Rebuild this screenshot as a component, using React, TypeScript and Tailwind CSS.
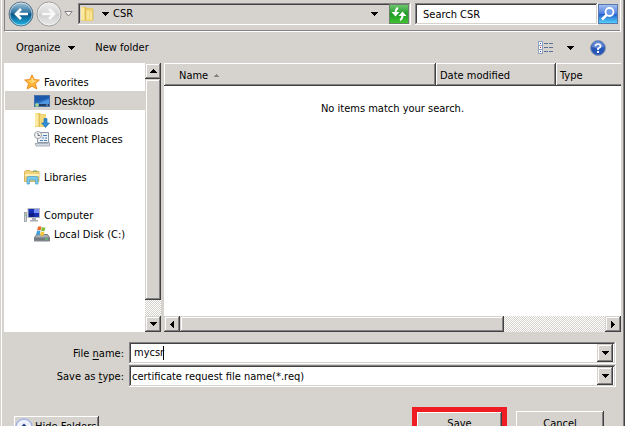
import React from 'react'

const raised =
  'bg-[#d6d3ce] shadow-[inset_-1px_-1px_#424142,inset_1px_1px_#d6d3ce,inset_-2px_-2px_#848284,inset_2px_2px_#ffffff]'
const raisedWhite =
  'bg-[#d6d3ce] shadow-[inset_-1px_-1px_#424142,inset_1px_1px_#ffffff,inset_-2px_-2px_#848284]'
const sunken =
  'shadow-[inset_-1px_-1px_#ffffff,inset_1px_1px_#848284,inset_-2px_-2px_#d6d3ce,inset_2px_2px_#424142]'
const track =
  'bg-[repeating-conic-gradient(#d6d3ce_0_25%,#ffffff_0_50%)] bg-[length:2px_2px]'

type Dir = 'up' | 'down' | 'left' | 'right'

const arrowShapes: Record<Dir, string> = {
  up: 'M3 0h1v1h1v1h1v1h1v1H0V3h1V2h1V1h1z',
  down: 'M0 0h7v1H6v1H5v1H4v1H3V3H2V2H1V1H0z',
  left: 'M0 3h1V2h1V1h1V0h1v7H3V6H2V5H1V4H0z',
  right: 'M0 0h1v1h1v1h1v1h1v1H3v1H2v1H1v1H0z',
}

function Arrow({ dir = 'down' as Dir, color = '#000000' }) {
  const flat = dir === 'up' || dir === 'down'
  const w = flat ? 7 : 4
  const h = flat ? 4 : 7
  return (
    <svg width={w} height={h} viewBox={`0 0 ${w} ${h}`} shapeRendering="crispEdges" aria-hidden="true">
      <path d={arrowShapes[dir]} fill={color} />
    </svg>
  )
}

function ScrollButton({ dir, label }: { dir: Dir; label: string }) {
  return (
    <button aria-label={label} className={`flex size-4 shrink-0 items-center justify-center ${raised}`}>
      <Arrow dir={dir} />
    </button>
  )
}

function NavIcon({ forward = false }) {
  const id = forward ? 'fwd' : 'back'
  return (
    <svg width="26" height="26" viewBox="0 0 26 26" aria-hidden="true">
      <defs>
        <linearGradient id={id} x1="0" y1="0" x2="0" y2="1">
          <stop offset="0" stopColor={forward ? '#eeeeee' : '#a9c9dd'} />
          <stop offset=".47" stopColor={forward ? '#d9d9d9' : '#286f9d'} />
          <stop offset=".5" stopColor={forward ? '#cfcfcf' : '#0a5585'} />
          <stop offset="1" stopColor={forward ? '#e9e9e9' : '#20b8ea'} />
        </linearGradient>
      </defs>
      <circle cx="13" cy="13" r="12" fill={`url(#${id})`} stroke={forward ? '#9b9b9b' : '#5c7488'} />
      <circle cx="13" cy="13" r="11" fill="none" stroke="#ffffff" strokeOpacity=".5" />
      <path
        d={forward ? 'M6 13h11M13 8l5 5-5 5' : 'M20 13H9M13 8l-5 5 5 5'}
        fill="none"
        stroke={forward ? '#f8f8f8' : '#ffffff'}
        strokeWidth="2.600"
      />
    </svg>
  )
}

function Folder() {
  return (
    <svg width="16" height="16" viewBox="0 0 16 16" aria-hidden="true">
      <path d="M1 1h5l1 1h6v13H1z" fill="#e8c85f" />
      <path d="M1 1l4 1v13l-4-1z" fill="#fbeaa0" />
      <path d="M6 4l7-1v11l-7 1z" fill="#f3d97a" />
      <path d="M8 5v8M11 6v8" stroke="#fdf3bf" />
      <path d="M5 2v13M13 3v11" stroke="#cfa83c" strokeWidth=".6" />
    </svg>
  )
}

function Star() {
  return (
    <svg width="16" height="16" viewBox="0 0 16 16" aria-hidden="true">
      <path
        d="M8 .8l2.200 4.800 5.200.4-4 3.500 1.400 5.500L8 12.200 3.200 15l1.300-5.500L.6 6l5.200-.4z"
        fill="#ffb43a"
        stroke="#e8871c"
        strokeWidth=".9"
      />
      <path d="M8 3l1.500 3.500 3.500.3L8 9z" fill="#ffe08a" />
      <path d="M8 3L6.500 6.500 3 6.800 8 9z" fill="#ffd066" />
    </svg>
  )
}

function DesktopIcon() {
  return (
    <svg width="16" height="16" viewBox="0 0 16 16" aria-hidden="true">
      <rect x=".5" y="2.500" width="15" height="11" fill="#2a6cc0" stroke="#4a72a8" />
      <path d="M1 3h14v2L1 9z" fill="#1c58ac" />
      <path d="M3 11L15 6v5z" fill="#4d97df" />
      <path d="M1 11h14v2H1z" fill="#243c60" />
      <circle cx="3" cy="12" r="2" fill="#46b8dc" />
      <path d="M3 10v4M1 12h4" stroke="#e4df57" strokeWidth=".8" />
      <path d="M12 12h2" stroke="#8fb1d5" />
    </svg>
  )
}

function Downloads() {
  return (
    <svg width="16" height="16" viewBox="0 0 16 16" aria-hidden="true">
      <path d="M1 1h5l1 1h5v13H1z" fill="#e8c85f" />
      <path d="M1 1l4 1v13l-4-1z" fill="#fbeaa0" />
      <path d="M6 3l6-1v12l-6 1z" fill="#f3d97a" />
      <path d="M5 2v13" stroke="#cfa83c" strokeWidth=".6" />
      <path d="M10 6.500h3V11h2.500l-4 4.500-4-4.500H10z" fill="#2f8fd8" stroke="#1767ab" strokeWidth=".6" />
    </svg>
  )
}

function Recent() {
  return (
    <svg width="16" height="16" viewBox="0 0 16 16" aria-hidden="true">
      <path d="M5 1.500h9.500v10h-11V6z" fill="#eef2f6" stroke="#8c98a5" />
      <path d="M1 12.500h12l2.500-1V15H2z" fill="#d4dae0" stroke="#8c98a5" strokeWidth=".7" />
      <path d="M9 4.500h4M8 7h2M11 7h2M6 9.500h3M10 9.500h3" stroke="#4682b8" />
      <circle cx="4" cy="4" r="3.500" fill="#f5f5f5" stroke="#9a9fa5" />
      <path d="M4 2v2.500h2" fill="none" stroke="#4c5661" strokeWidth=".8" />
    </svg>
  )
}

function Libraries() {
  return (
    <svg width="16" height="16" viewBox="0 0 16 16" aria-hidden="true">
      <path d="M.5 2.500L2 1.500h4l1 1h8v10H.5z" fill="#efd27a" stroke="#d1aa4b" strokeWidth=".8" />
      <path d="M1 5h14v2H1z" fill="#fff1b5" />
      <path d="M9 2h4" stroke="#68a862" />
      <path d="M3 15V9q0-1.500 1.500-1.500h8Q14 7.500 14 9v6h-2.500v-4h-6v4z" fill="#78c9ed" stroke="#4b9fc9" strokeWidth=".7" />
    </svg>
  )
}

function Computer() {
  return (
    <svg width="16" height="16" viewBox="0 0 16 16" aria-hidden="true">
      <rect x=".5" y="5.500" width="2" height="9" fill="#cfd3d6" stroke="#858b91" strokeWidth=".7" />
      <path d="M1 8h1" stroke="#53c653" />
      <rect x="4" y="1.500" width="11.500" height="9" fill="#1530b5" stroke="#b4b8be" />
      <path d="M10 2h5v4h-5z" fill="#7990f0" />
      <path d="M5 6h5v4H5z" fill="#0c1c84" />
      <path d="M8 11h4v2h2v1.500H6V13h2z" fill="#a7adb4" />
    </svg>
  )
}

function Disk() {
  return (
    <svg width="16" height="16" viewBox="0 0 16 16" aria-hidden="true">
      <path d="M2.500 8.500h11l2 3v3.500H.5v-3.500z" fill="#a8adb1" stroke="#5f666b" strokeWidth=".8" />
      <path d="M1 11.500h14v3H1z" fill="#737b80" />
      <path d="M11 13h3" stroke="#64e36a" />
      <path d="M4 .8q2-1 3.500 0L6.500 4.500Q5 3.500 3 4.500z" fill="#ef6a2b" />
      <path d="M8 1q2 1 3.500 0l-1 4Q9 5.500 7 4.800z" fill="#7abf36" />
      <path d="M3 5q2-1 3.500 0l-1 4Q4 8 2 9z" fill="#3aa0e2" />
      <path d="M7 5.500q2 1 3.500 0l-1 4Q8 10 6 9.300z" fill="#fac432" />
    </svg>
  )
}

function Refresh() {
  return (
    <svg width="20" height="20" viewBox="0 0 20 20" aria-hidden="true">
      <defs>
        <linearGradient id="refresh" x1="0" y1="0" x2="0" y2="1">
          <stop offset="0" stopColor="#72c873" />
          <stop offset=".5" stopColor="#1f9a26" />
          <stop offset="1" stopColor="#42c531" />
        </linearGradient>
      </defs>
      <rect x=".5" y=".5" width="19" height="19" fill="url(#refresh)" stroke="#66836a" />
      <path d="M9 4Q6.500 5 6.500 9M11 16q2.500-1 2.500-5" fill="none" stroke="#ffffff" strokeWidth="2" />
      <path d="M2.500 8h8l-4 4.500zM9.500 12h8l-4-4.500z" fill="#ffffff" />
    </svg>
  )
}

function SearchIcon() {
  return (
    <svg width="20" height="20" viewBox="0 0 20 20" aria-hidden="true">
      <defs>
        <linearGradient id="search" x1="0" y1="0" x2="0" y2="1">
          <stop offset="0" stopColor="#a9c2f2" />
          <stop offset=".48" stopColor="#4d7fe0" />
          <stop offset=".52" stopColor="#2361d0" />
          <stop offset="1" stopColor="#55d6fa" />
        </linearGradient>
      </defs>
      <rect x=".5" y=".5" width="19" height="19" fill="url(#search)" stroke="#5a78ac" />
      <circle cx="11.500" cy="8" r="4" fill="#6d9be8" stroke="#ffffff" strokeWidth="1.800" />
      <path d="M8.500 11L4 15.500" stroke="#ffffff" strokeWidth="2.500" />
    </svg>
  )
}

function ViewIcon() {
  return (
    <svg width="16" height="13" viewBox="0 0 16 13" shapeRendering="crispEdges" aria-hidden="true">
      {[0, 4, 8].map((y, i) => (
        <g key={y}>
          <rect x=".5" y={y + 0.5} width="4" height="4" fill="#ffffff" stroke="#8fa2c4" />
          <rect x="2" y={y + 2} width="1" height="1" fill={i === 1 ? '#d02020' : '#1f55a5'} />
          <path d={`M6 ${y + 2.5}h4M11 ${y + 2.5}h4`} stroke="#5c7299" />
        </g>
      ))}
    </svg>
  )
}

function HelpIcon() {
  return (
    <svg width="16" height="16" viewBox="0 0 16 16" aria-hidden="true">
      <circle cx="8" cy="8" r="7.400" fill="#2857b8" stroke="#8090b0" />
      <path d="M2 7a6 6 0 0 1 12 0Q8 9 2 7z" fill="#6288d4" />
      <path d="M5.500 6.200Q5.500 4 8 4t2.500 2.200Q10.500 7.500 8 8.500V10" fill="none" stroke="#ffffff" strokeWidth="1.700" />
      <rect x="7" y="11" width="2" height="2" fill="#ffffff" />
    </svg>
  )
}

function HideIcon() {
  return (
    <svg width="18" height="18" viewBox="0 0 18 18" aria-hidden="true">
      <circle cx="9" cy="9" r="8" fill="#eef1fa" stroke="#a6b4e2" strokeWidth="1.500" />
      <path d="M9 5.500l3.500 3.500h-2v3h-3V9h-2z" fill="#24448e" />
    </svg>
  )
}

function TreeItem({
  icon,
  label,
  child = false,
  selected = false,
}: {
  icon: React.ReactNode
  label: string
  child?: boolean
  selected?: boolean
}) {
  return (
    <li>
      <button
        className={`flex h-[19px] w-full items-center gap-1 whitespace-nowrap ${child ? 'pl-[29px]' : 'pl-[19px]'} ${
          selected ? 'bg-[#d6d3ce]' : ''
        }`}
      >
        {icon}
        <span className="pt-0.5">{label}</span>
      </button>
    </li>
  )
}

export default function App() {
  return (
    <div className="flex h-screen overflow-hidden border-r border-[#424142] bg-[#d6d3ce] pl-px font-['DejaVu_Sans_Condensed','DejaVu_Sans',sans-serif] text-[11px] leading-[14px] text-black">
      <div className="flex min-w-0 flex-1 flex-col border-r border-l border-r-[#848284] border-l-white pr-[2px] pl-[2px]">
        <header className="flex h-8 shrink-0 items-start border-r border-b border-l border-white border-l-[#848284] pl-[3px] shadow-[inset_0_-1px_#848284]">
          <nav className="flex shrink-0 items-center gap-[2px] pt-px">
            <button aria-label="Back">
              <NavIcon />
            </button>
            <button aria-label="Forward">
              <NavIcon forward />
            </button>
            <button aria-label="Recent locations">
              <svg width="9" height="6" viewBox="0 0 9 6" aria-hidden="true">
                <path d="M.8.5h7.400L4.500 5z" fill="#f5f5f5" stroke="#848284" />
              </svg>
            </button>
          </nav>
          <div className={`mt-[3px] ml-[5px] flex h-[22px] min-w-0 flex-1 items-center pl-[2px] ${sunken}`}>
            <Folder />
            <button aria-label="Show path" className="mr-1 ml-1.5">
              <Arrow />
            </button>
            <span className="flex-1">CSR</span>
            <button aria-label="Previous locations" className="mr-[11px]">
              <Arrow />
            </button>
            <button aria-label="Refresh" className="mr-[2px]">
              <Refresh />
            </button>
          </div>
          <div className="mt-[3px] ml-1 flex w-[205px] shrink-0 items-center">
            <input
              type="text"
              aria-label="Search CSR"
              placeholder="Search CSR"
              className={`h-[22px] w-[183px] bg-white px-2 outline-none placeholder:text-black placeholder:opacity-100 ${sunken}`}
            />
            <button aria-label="Search">
              <SearchIcon />
            </button>
          </div>
        </header>

        <div className="flex h-[31px] shrink-0 items-center pr-[15px] pl-3">
          <button className="flex items-center gap-2">
            Organize <Arrow />
          </button>
          <button className="ml-5">New folder</button>
          <span className="flex-1" />
          <button aria-label="Change view">
            <ViewIcon />
          </button>
          <button aria-label="More views" className="mr-4 ml-[13px]">
            <Arrow />
          </button>
          <button aria-label="Help">
            <HelpIcon />
          </button>
        </div>

        <main className="flex min-h-0 flex-1 gap-[3px]">
          <aside className="flex w-[157px] shrink-0 bg-white">
            <nav className="min-w-0 flex-1 pt-[9px] pl-px">
              <ul>
                <TreeItem icon={<Star />} label="Favorites" />
                <TreeItem icon={<DesktopIcon />} label="Desktop" child selected />
                <TreeItem icon={<Downloads />} label="Downloads" child />
                <TreeItem icon={<Recent />} label="Recent Places" child />
              </ul>
              <ul className="mt-[19px]">
                <TreeItem icon={<Libraries />} label="Libraries" />
              </ul>
              <ul className="mt-[19px]">
                <TreeItem icon={<Computer />} label="Computer" />
                <TreeItem icon={<Disk />} label="Local Disk (C:)" child />
              </ul>
            </nav>
            <div className={`flex w-4 flex-col ${track}`}>
              <ScrollButton dir="up" label="Scroll up" />
              <div className={`flex-1 ${raised}`} />
              <div className="h-4" />
              <ScrollButton dir="down" label="Scroll down" />
            </div>
          </aside>

          <section className="flex min-w-0 flex-1 flex-col bg-white">
            <table className="w-full table-fixed border-collapse">
              <thead>
                <tr className="h-[23px] text-left">
                  <th className={`w-[272px] pt-0.5 pr-0 pb-0 pl-[15px] font-normal ${raisedWhite}`}>
                    <button className="flex items-center gap-1.5">
                      Name
                      <svg width="5" height="3" viewBox="0 0 5 3" shapeRendering="crispEdges" aria-hidden="true">
                        <path d="M2 0h1v1h1v1h1v1H0V2h1V1h1z" fill="#848284" />
                      </svg>
                    </button>
                  </th>
                  <th className={`w-[120px] pt-0.5 pr-0 pb-0 pl-1 font-normal ${raisedWhite}`}>Date modified</th>
                  <th className="bg-[#d6d3ce] pt-0.5 pr-0 pb-0 pl-1 font-normal shadow-[inset_0_-1px_#424142,inset_1px_1px_#ffffff,inset_0_-2px_#848284]">
                    Type
                  </th>
                </tr>
              </thead>
              <tbody>
                <tr>
                  <td colSpan={3} className="px-0 pt-4 text-center">
                    No items match your search.
                  </td>
                </tr>
              </tbody>
            </table>
            <div className={`mt-auto flex h-4 ${track}`}>
              <ScrollButton dir="left" label="Scroll left" />
              <div className={`w-[71%] ${raised}`} />
              <div className="flex-1" />
              <ScrollButton dir="right" label="Scroll right" />
            </div>
          </section>
        </main>

        <footer className="h-[94px] shrink-0 overflow-hidden pt-[10px]">
          <div className="flex flex-col gap-px pr-[5px]">
            <div className="flex h-[22px] items-center">
              <label htmlFor="file-name" className="w-[125px] shrink-0 pt-0.5 pr-[5px] text-right">
                File <u className="underline-offset-2">n</u>ame:
              </label>
              <div className={`flex h-full min-w-0 flex-1 items-center bg-white py-[2px] pr-[3px] pl-[2px] ${sunken}`}>
                <div className="relative min-w-0 flex-1">
                  <input
                    id="file-name"
                    type="text"
                    defaultValue="mycsr"
                    className="w-full bg-transparent pl-[3px] caret-transparent outline-none"
                  />
                  <span className="pointer-events-none absolute inset-y-0 left-8 w-px bg-black" />
                </div>
                <button aria-label="Show file names" className={`flex h-full w-4 items-center justify-center ${raised}`}>
                  <Arrow />
                </button>
              </div>
            </div>
            <div className="flex h-[22px] items-center">
              <label htmlFor="save-type" className="w-[125px] shrink-0 pt-0.5 pr-[5px] text-right">
                Save as <u className="underline-offset-2">t</u>ype:
              </label>
              <div className={`relative flex h-full min-w-0 flex-1 items-center bg-white p-[2px] ${sunken}`}>
                <select id="save-type" className="w-full appearance-none bg-transparent pt-0.5 pl-px outline-none">
                  <option>certificate request file name(*.req)</option>
                </select>
                <span
                  className={`pointer-events-none absolute inset-y-[2px] right-[3px] flex w-4 items-center justify-center ${raised}`}
                >
                  <Arrow />
                </span>
              </div>
            </div>
          </div>
          <div className="mt-5 flex items-start pr-[17px] pl-[10px]">
            <button className={`mt-[9px] flex h-[22px] w-[85px] items-center gap-[2px] whitespace-nowrap pl-px ${raisedWhite}`}>
              <HideIcon />
              <span>Hide Folders</span>
            </button>
            <span className="flex-1" />
            <div className="border-5 border-[#ef1c24]">
              <button className={`block h-[24px] w-[85px] ${raisedWhite}`}>
                <u className="underline-offset-2">S</u>ave
              </button>
            </div>
            <button className={`mt-1 ml-[9px] h-[24px] w-[88px] pt-0.5 ${raisedWhite}`}>Cancel</button>
          </div>
        </footer>
      </div>
    </div>
  )
}
